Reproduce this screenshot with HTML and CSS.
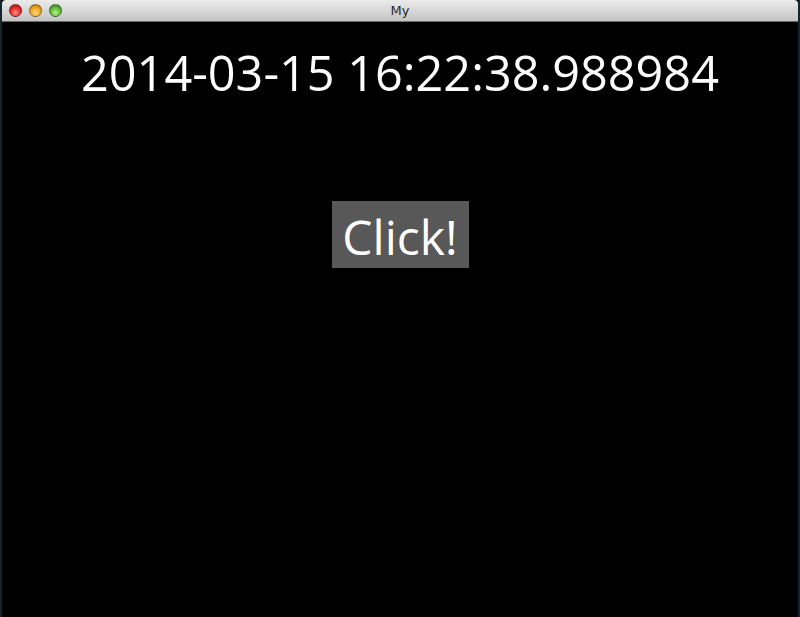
FILE: index.html
```html
<!DOCTYPE html>
<html lang="en">
<head>
    <meta charset="UTF-8">
    <meta name="viewport" content="width=device-width, initial-scale=1.0">
    <title>My</title>
    <link rel="stylesheet" href="styles.css">
</head>
<body>
    <div class="window">
        <div class="titlebar">
            <div class="lights">
                <span class="light red"></span>
                <span class="light yellow"></span>
                <span class="light green"></span>
            </div>
            <div class="title">My</div>
        </div>
        <div class="content">
            <div class="clock">2014-03-15 16:22:38.988984</div>
            <button class="click-btn">Click!</button>
        </div>
    </div>
</body>
</html>
```

FILE: styles.css
```css
html, body {
    margin: 0;
    height: 100%;
    background-color: #15252c;
}
.window {
    margin-left: 2px;
    width: 796px;
    height: 617px;
    background-color: #000;
    display: flex;
    flex-direction: column;
}
.titlebar {
    height: 21px;
    position: relative;
    background: linear-gradient(#ebebeb, #c4c4c4);
    border-bottom: 1px solid #6a6a6a;
    border-top-right-radius: 4px;
    border-top-left-radius: 4px;
}
.lights {
    display: flex;
    gap: 7px;
    padding: 4px 0 0 7px;
}
.light {
    width: 13px;
    height: 13px;
    border-radius: 50%;
    box-sizing: border-box;
    border: 1px solid rgba(0, 0, 0, 0.35);
}
.red {
    background: radial-gradient(circle at 50% 70%, #ff8a80, #e0282c 55%, #a5161a);
}
.yellow {
    background: radial-gradient(circle at 50% 70%, #ffd77a, #f0a21c 55%, #b06d0a);
}
.green {
    background: radial-gradient(circle at 50% 70%, #b8f08a, #5cb736 55%, #2e7a1a);
}
.title {
    position: absolute;
    top: 0;
    left: 0;
    right: 0;
    text-align: center;
    font-family: "DejaVu Sans", sans-serif;
    font-size: 13px;
    line-height: 21px;
    color: #2a2a2a;
}
.content {
    flex: 1;
    display: flex;
    flex-direction: column;
    align-items: center;
    font-family: "Open Sans", sans-serif;
    color: #fff;
}
.clock {
    font-size: 48.6px;
    line-height: 48px;
    margin-top: 26px;
}
.click-btn {
    margin-top: 105px;
    width: 137px;
    height: 67px;
    padding: 4px 0 0;
    border: none;
    border-radius: 0;
    background-color: #585858;
    color: #fff;
    font-family: "Open Sans", sans-serif;
    font-size: 48px;
    line-height: 63px;
}
```
